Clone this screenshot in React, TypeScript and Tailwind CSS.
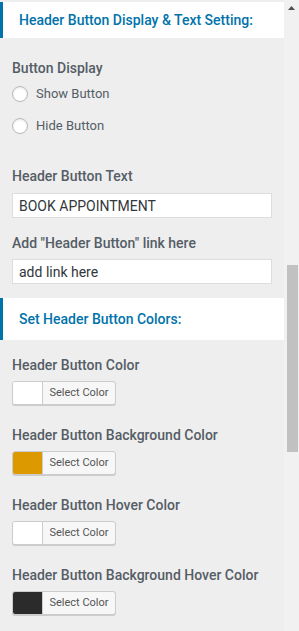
const font = { fontFamily: 'Roboto, "Liberation Sans", sans-serif' };

function SectionHeader({ title, height }: { title: string; height: string }) {
  return (
    <div className={`flex items-center border-l-[3px] border-[#0073aa] bg-white pl-[16px] ${height}`}>
      <h3 className="text-[14px] font-medium text-[#0073aa]">{title}</h3>
    </div>
  );
}

function Radio({ label, top }: { label: string; top: string }) {
  return (
    <label className={`flex h-[20px] items-center gap-[8px] ${top}`}>
      <span className="size-[16px] rounded-full border border-[#b4b9be] bg-white shadow-[inset_0_1px_2px_rgba(0,0,0,0.1)]" />
      <span className="text-[13px] text-[#555d66]">{label}</span>
    </label>
  );
}

function ColorControl({ label, swatch, top }: { label: string; swatch: string; top: string }) {
  return (
    <div className={top}>
      <div className="h-[20px] text-[14px] font-medium leading-[20px] text-[#555d66]">{label}</div>
      <div className="mt-[6px] flex h-[24px] w-[104px] overflow-hidden rounded-[3px] border border-[#ccc] bg-[#f7f7f7] shadow-[0_1px_0_#ccc]">
        <span className={`w-[30px] border-r border-[#ccc] ${swatch}`} />
        <span className="flex flex-1 items-center justify-center text-[11px] text-[#555]">Select Color</span>
      </div>
    </div>
  );
}

export default function App() {
  return (
    <div className="flex h-[631px] w-[299px] overflow-hidden bg-[#eee]" style={font}>
      <div className="w-[284px] pt-[2px]">
        <SectionHeader title="Header Button Display & Text Setting:" height="h-[36px]" />
        <div className="px-[12px]">
          <div className="mt-[20px] h-[20px] text-[14px] font-medium leading-[20px] text-[#555d66]">Button Display</div>
          <Radio label="Show Button" top="mt-[6px]" />
          <Radio label="Hide Button" top="mt-[12px]" />

          <div className="mt-[30px] h-[20px] text-[14px] font-medium leading-[20px] text-[#555d66]">Header Button Text</div>
          <input
            type="text"
            readOnly
            value="BOOK APPOINTMENT"
            className="mt-[7px] block h-[25px] w-[260px] border border-[#ddd] bg-white px-[6px] text-[14px] text-[#32373c] outline-none"
          />
          <div className="mt-[15px] h-[20px] text-[14px] font-medium leading-[20px] text-[#555d66]">Add "Header Button" link here</div>
          <input
            type="text"
            readOnly
            value="add link here"
            className="mt-[6px] block h-[25px] w-[260px] border border-[#ddd] bg-white px-[6px] text-[14px] text-[#32373c] outline-none"
          />
        </div>
        <div className="mt-[14px]">
          <SectionHeader title="Set Header Button Colors:" height="h-[42px]" />
        </div>
        <div className="px-[12px]">
          <ColorControl label="Header Button Color" swatch="bg-white" top="mt-[15px]" />
          <ColorControl label="Header Button Background Color" swatch="bg-[#dd9900]" top="mt-[20px]" />
          <ColorControl label="Header Button Hover Color" swatch="bg-white" top="mt-[20px]" />
          <ColorControl label="Header Button Background Hover Color" swatch="bg-[#2b2b2b]" top="mt-[20px]" />
        </div>
      </div>
      <div className="flex w-[15px] flex-col items-center bg-[#f1f1f1]">
        <svg width="7" height="4" viewBox="0 0 7 4" className="mt-[6px]">
          <path d="M0 4 L3.5 0 L7 4 Z" fill="#505050" />
        </svg>
        <div className="ml-[1px] mt-[255px] h-[187px] w-[11px] bg-[#c1c1c1]" />
      </div>
    </div>
  );
}
